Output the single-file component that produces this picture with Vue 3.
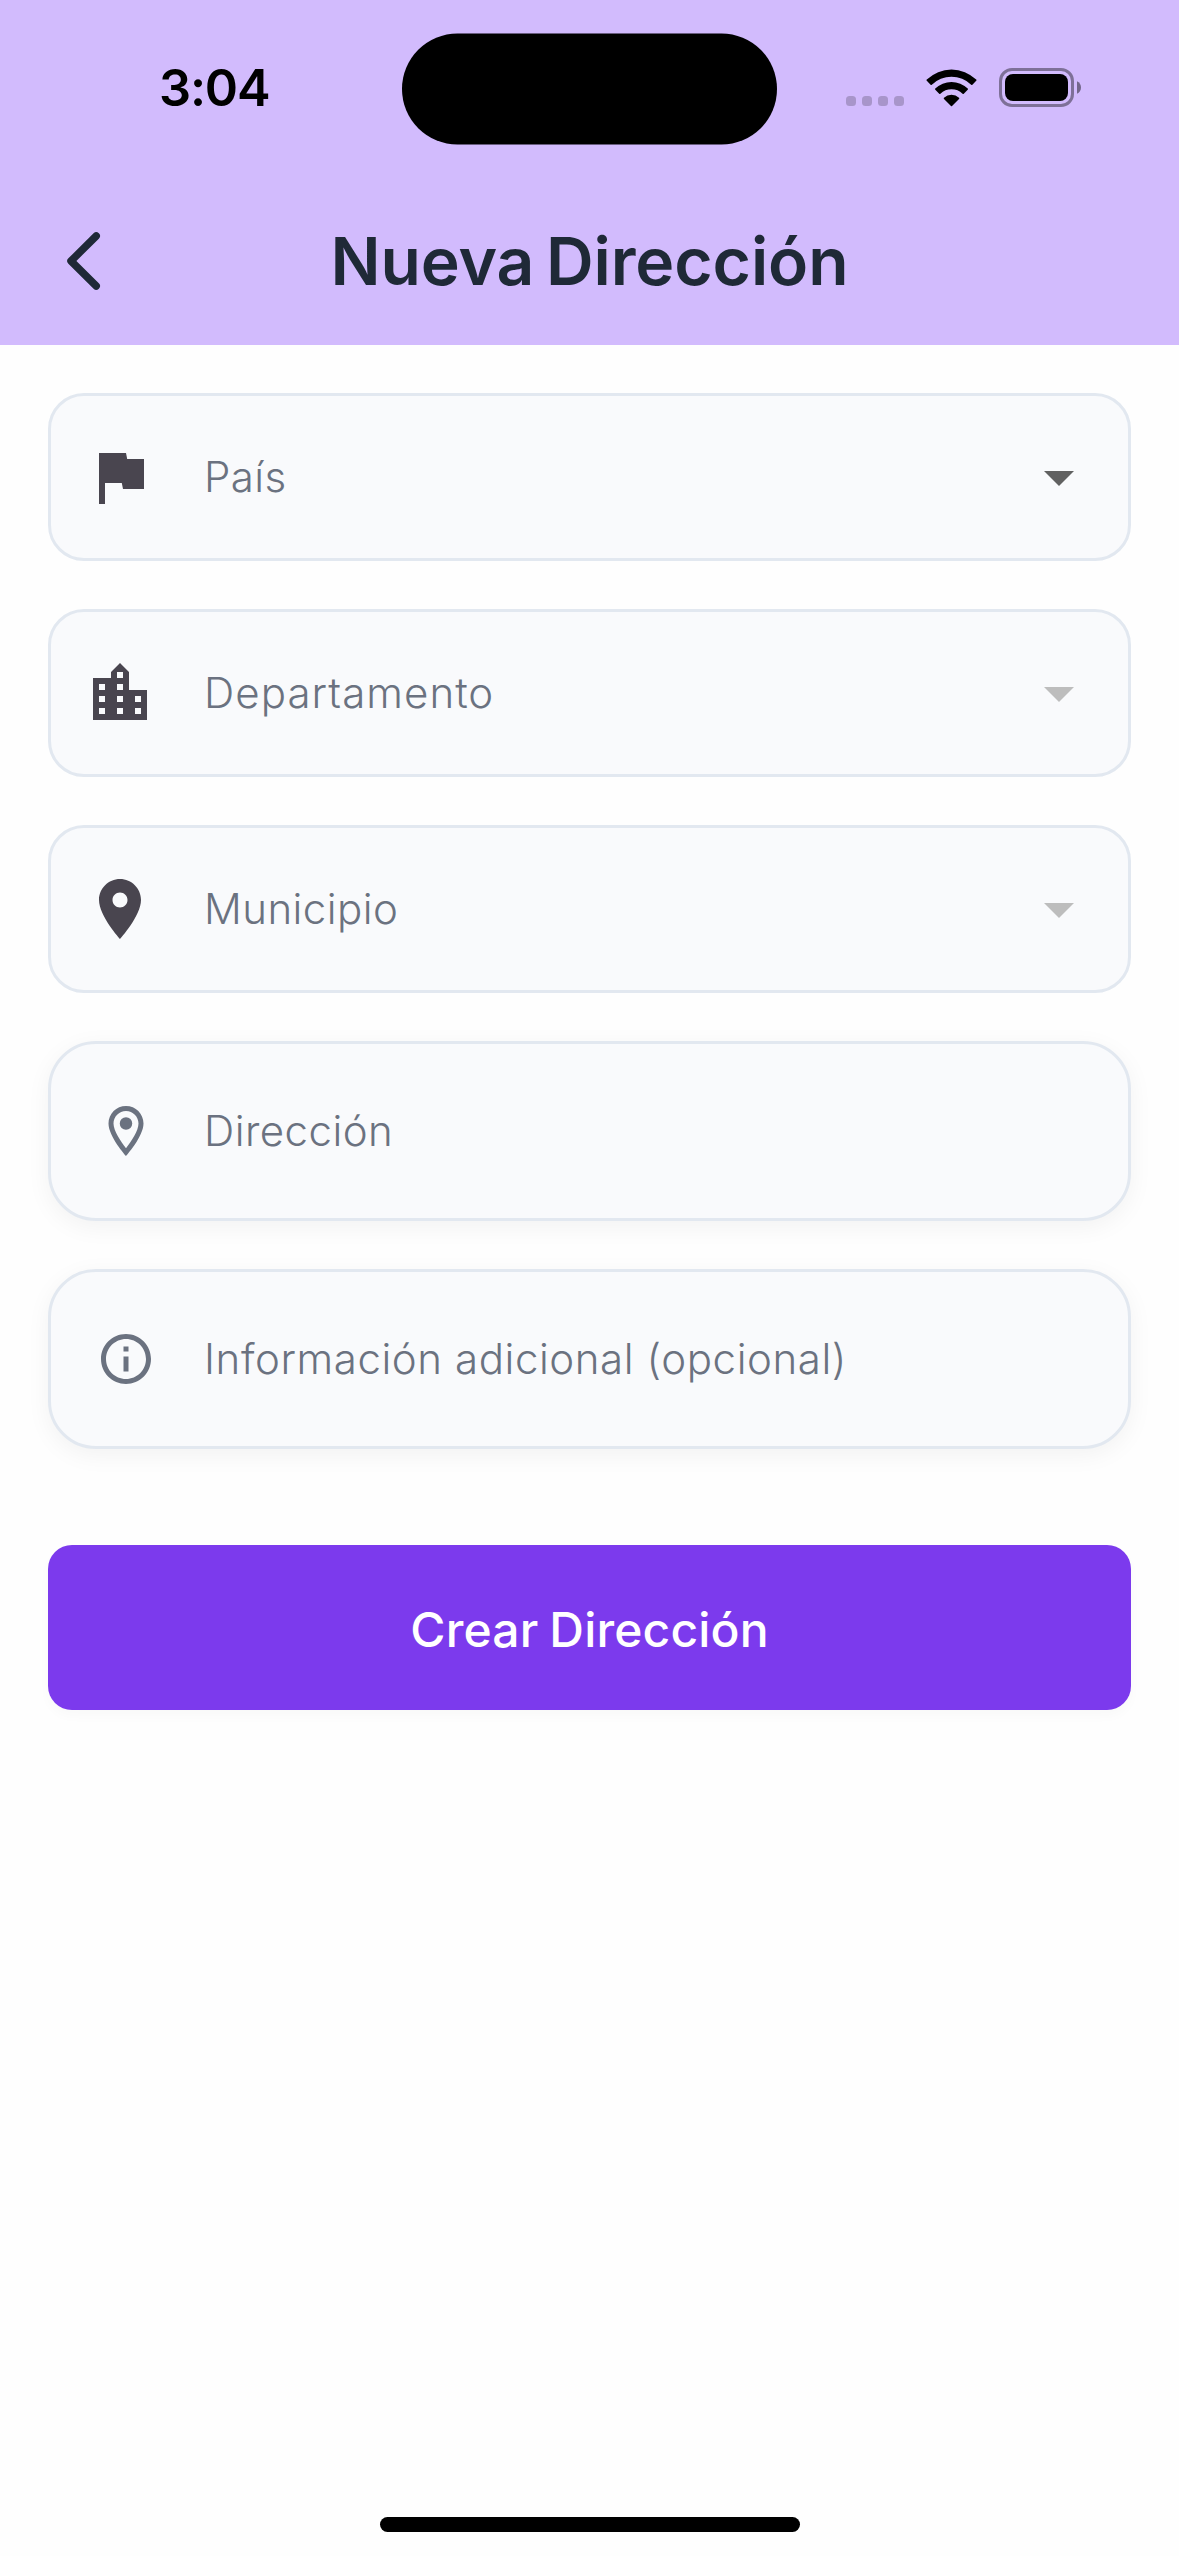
<script setup>
const selects = [
  { id: 'pais', label: 'País', icon: 'M14.4 6L14 4H5v17h2v-7h5.6l.4 2h7V6z', enabled: true },
  {
    id: 'departamento',
    label: 'Departamento',
    icon: 'M15 11V5l-3-3-3 3v2H3v14h18V11h-6zm-8 8H5v-2h2v2zm0-4H5v-2h2v2zm0-4H5V9h2v2zm6 8h-2v-2h2v2zm0-4h-2v-2h2v2zm0-4h-2V9h2v2zm0-4h-2V5h2v2zm6 12h-2v-2h2v2zm0-4h-2v-2h2v2z',
    enabled: false,
  },
  {
    id: 'municipio',
    label: 'Municipio',
    icon: 'M12 2C8.13 2 5 5.13 5 9c0 5.25 7 13 7 13s7-7.75 7-13c0-3.87-3.13-7-7-7zm0 9.5c-1.38 0-2.5-1.12-2.5-2.5s1.12-2.5 2.5-2.5 2.5 1.12 2.5 2.5-1.12 2.5-2.5 2.5z',
    enabled: false,
  },
]

const inputs = [
  {
    id: 'direccion',
    label: 'Dirección',
    icon: 'M12 2C8.13 2 5 5.13 5 9c0 5.25 7 13 7 13s7-7.75 7-13c0-3.87-3.13-7-7-7zM7 9c0-2.76 2.24-5 5-5s5 2.24 5 5c0 2.88-2.88 7.19-5 9.88C9.92 16.21 7 11.85 7 9zm5-2.5a2.5 2.5 0 1 0 0 5 2.5 2.5 0 0 0 0-5z',
  },
  {
    id: 'informacion',
    label: 'Información adicional (opcional)',
    icon: 'M11 7h2v2h-2zm0 4h2v6h-2zm1-9C6.48 2 2 6.48 2 12s4.48 10 10 10 10-4.48 10-10S17.52 2 12 2zm0 18c-4.41 0-8-3.59-8-8s3.59-8 8-8 8 3.59 8 8-3.59 8-8 8z',
  },
]
</script>

<template>
  <div class="screen">
    <header class="header">
      <div class="status">
        <div class="status-side left"><span class="time">3:04</span></div>
        <div class="island"></div>
        <div class="status-side right">
          <div class="cell"><i v-for="n in 4" :key="n"></i></div>
          <svg class="wifi" viewBox="0 0 51 38">
            <path d="M0.8 10.6a35.3 35.3 0 0 1 49.4 0a.8.8 0 0 1 0 1.200l-3.800 3.900a.8.8 0 0 1-1.200 0a28.200 28.200 0 0 0-39.400 0a.8.8 0 0 1-1.200 0l-3.800-3.900a.8.8 0 0 1 0-1.200z" />
            <path d="M9.300 19.600a23 23 0 0 1 32.400 0a.8.8 0 0 1 0 1.200l-3.900 3.900a.8.8 0 0 1-1.200 0a16 16 0 0 0-22.200 0a.8.8 0 0 1-1.200 0l-3.900-3.900a.8.8 0 0 1 0-1.200z" />
            <path d="M18 28.700a11 11 0 0 1 15 0a.8.8 0 0 1 0 1.200l-7 7.200a.7.7 0 0 1-1 0l-7-7.200a.8.8 0 0 1 0-1.200z" />
          </svg>
          <svg class="battery" viewBox="0 0 82 39">
            <rect x="1.500" y="1.500" width="72" height="36" rx="11.500" fill="none" stroke="#000" stroke-opacity=".4" stroke-width="3" />
            <rect x="6" y="6" width="63" height="27" rx="8" />
            <path d="M78 13.200c2.500 1 4 3.500 4 6.300s-1.500 5.300-4 6.300z" fill-opacity=".45" />
          </svg>
        </div>
      </div>
      <div class="appbar">
        <svg class="back" viewBox="0 0 72 72">
          <path d="M48.200 11L23 36l25.200 25" />
        </svg>
        <h1 class="title">Nueva Dirección</h1>
      </div>
    </header>

    <main class="form">
      <div v-for="f in selects" :key="f.id" class="field select">
        <svg class="lead" viewBox="0 0 24 24"><path :d="f.icon" /></svg>
        <span :class="['label', f.id]">{{ f.label }}</span>
        <svg :class="['arrow', { disabled: !f.enabled }]" viewBox="0 0 24 24"><path d="M7 10l5 5 5-5z" /></svg>
      </div>
      <div v-for="f in inputs" :key="f.id" class="field input">
        <svg class="lead" viewBox="0 0 24 24"><path :d="f.icon" /></svg>
        <span :class="['label', f.id]">{{ f.label }}</span>
      </div>
      <button class="submit" type="button"><span>Crear Dirección</span></button>
    </main>

    <footer class="home"><div class="home-bar"></div></footer>
  </div>
</template>

<style>
body {
  margin: 0;
  background: #fefefe;
}
</style>

<style scoped>
.screen {
  width: 1179px;
  height: 2556px;
  display: flex;
  flex-direction: column;
  overflow: hidden;
  background: #fefefe;
  font-family: Inter, 'Liberation Sans', sans-serif;
}
.header {
  height: 345px;
  flex: none;
  background: #d2bbfd;
}
.status {
  height: 177px;
  display: flex;
  align-items: center;
  box-sizing: border-box;
}
.status-side {
  width: 402px;
  height: 177px;
  display: flex;
  box-sizing: border-box;
}
.left {
  padding: 58px 0 0 159px;
}
.time {
  font-size: 50.5px;
  line-height: 60px;
  font-weight: 600;
  letter-spacing: -1.2px;
  color: #000;
}
.island {
  width: 375px;
  height: 111px;
  border-radius: 56px;
  background: #000;
  transform: translateY(0.5px);
}
.right {
  padding: 68px 0 0 69px;
}
.cell {
  display: flex;
  gap: 6px;
  margin-top: 28px;
}
.cell i {
  width: 10px;
  height: 10px;
  border-radius: 3.5px;
  background: rgba(0, 0, 0, 0.2);
}
.wifi {
  width: 51px;
  height: 38px;
  margin: 1px 0 0 22px;
}
.battery {
  width: 82px;
  height: 39px;
  margin-left: 22px;
}
.appbar {
  height: 168px;
  display: flex;
  align-items: center;
}
.back {
  width: 72px;
  height: 72px;
  margin-left: 48px;
  fill: none;
  stroke: #1f2937;
  stroke-width: 7.5;
  stroke-linecap: round;
  stroke-linejoin: round;
}
.title {
  flex: 1;
  margin: 0 120px 0 0;
  text-align: center;
  font-size: 66px;
  line-height: 84px;
  font-weight: 600;
  letter-spacing: -0.1px;
  word-spacing: -5px;
  color: #1f2937;
  white-space: nowrap;
}
.form {
  flex: 1;
  display: flex;
  flex-direction: column;
  gap: 48px;
  padding: 48px 48px 0;
}
.field {
  display: flex;
  align-items: center;
  box-sizing: border-box;
  border: 3px solid #e2e8f0;
  background: #f9fafc;
  color: #6b7280;
}
.select {
  height: 168px;
  border-radius: 36px;
  padding: 0 33px;
}
.input {
  height: 180px;
  border-radius: 48px;
  padding: 0 45px;
  box-shadow: 0 6px 24px rgba(0, 0, 0, 0.05);
}
.lead {
  flex: none;
}
.select .lead {
  width: 72px;
  height: 72px;
  margin-right: 48px;
  fill: #49454f;
}
.input .lead {
  width: 60px;
  height: 60px;
  margin-right: 48px;
  fill: #6b7280;
}
.label {
  flex: 1;
  font-size: 42px;
  line-height: 60px;
  font-weight: 300;
  letter-spacing: 0.45px;
  white-space: nowrap;
}
.departamento {
  letter-spacing: 1.05px;
}
.informacion {
  letter-spacing: 0.58px;
}
.arrow {
  width: 72px;
  height: 72px;
  fill: #616161;
}
.arrow.disabled {
  fill: #bdbdbd;
}
.submit {
  height: 165px;
  margin-top: 48px;
  padding: 3px 0 0;
  border: 0;
  border-radius: 24px;
  background: #7c3aed;
  color: #fff;
  font-family: inherit;
  font-size: 48px;
  font-weight: 500;
  letter-spacing: 0.15px;
  word-spacing: -2px;
  box-shadow: 0 6px 12px rgba(0, 0, 0, 0.025);
}
.home {
  display: flex;
  justify-content: center;
  padding-bottom: 24px;
}
.home-bar {
  width: 420px;
  height: 15px;
  border-radius: 8px;
  background: #000;
}
</style>
